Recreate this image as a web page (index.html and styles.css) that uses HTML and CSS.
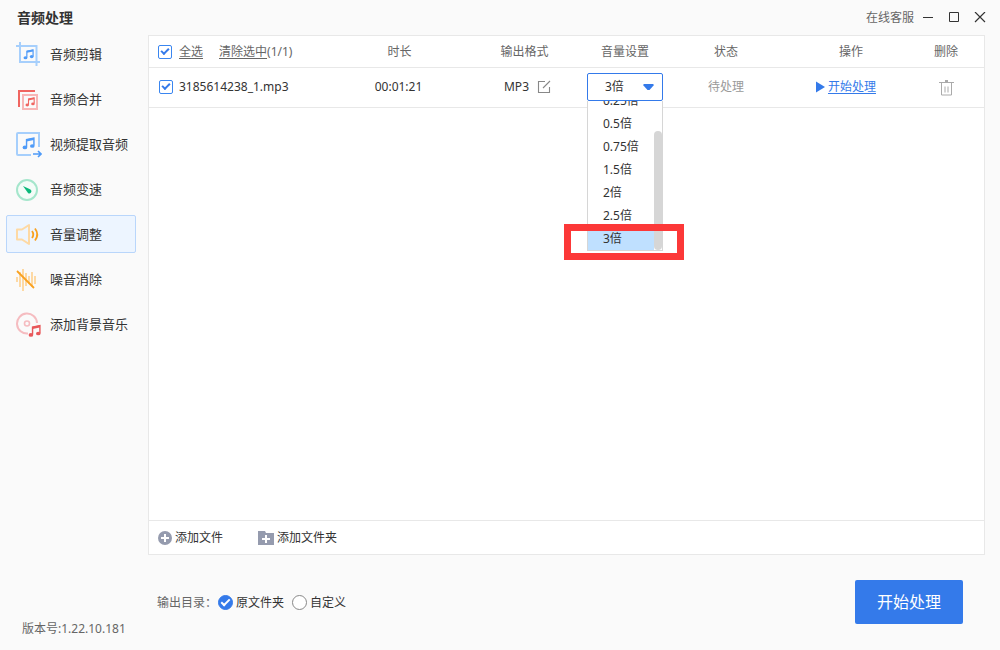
FILE: index.html
```html
<!DOCTYPE html>
<html lang="zh-CN">
<head>
<meta charset="utf-8">
<title>音频处理</title>
<link rel="stylesheet" href="styles.css">
</head>
<body>
<svg class="defs" aria-hidden="true">
  <symbol id="note" viewBox="0 0 12 12">
    <path d="M4.2 9.2V2.4L11 1v6.8" fill="none" stroke="currentColor" stroke-width="1.3"/>
    <path d="M4.2 2l6.8-1.4v2.2L4.2 4.2z" fill="currentColor"/>
    <ellipse cx="2.7" cy="9.6" rx="2.1" ry="1.7" fill="currentColor"/>
    <ellipse cx="9.5" cy="8.3" rx="2.1" ry="1.7" fill="currentColor"/>
  </symbol>
</svg>
<header class="titlebar">
  <h1 class="title">音频处理</h1>
  <div class="window-tools">
    <a class="service" href="#">在线客服</a>
    <button class="win-btn" aria-label="最小化"><svg width="12" height="12"><path d="M1 5.500h10" stroke="#333"/></svg></button>
    <button class="win-btn" aria-label="最大化"><svg width="12" height="12"><path d="M1.500 0.500h9v9h-9z" fill="none" stroke="#333"/></svg></button>
    <button class="win-btn" aria-label="关闭"><svg width="12" height="12"><path d="M1 0l10 10M11 0L1 10" stroke="#333" stroke-width="1.200"/></svg></button>
  </div>
</header>
<div class="layout">
  <aside class="sidebar">
    <nav class="menu">
      <a class="menu-item" href="#">
        <svg class="menu-icon blue" viewBox="0 0 26 26"><path d="M0 4h20.500V24M4 0v20h20" fill="none" stroke="#a6cffc" stroke-width="2"/><use href="#note" x="7" y="7" width="11" height="11"/></svg>音频剪辑</a>
      <a class="menu-item" href="#">
        <svg class="menu-icon red" viewBox="0 0 26 26"><path d="M3 20V4h16" fill="none" stroke="#f06560" stroke-width="2"/><path d="M7 8h14v14H7z" fill="none" stroke="#f8b6b6" stroke-width="2"/><use href="#note" x="9" y="10" width="10" height="10"/></svg>音频合并</a>
      <a class="menu-item" href="#">
        <svg class="menu-icon blue" viewBox="0 0 26 26"><path d="M15 23H2a1 1 0 0 1-1-1V2a1 1 0 0 1 1-1h21v14" fill="none" stroke="#a6cffc" stroke-width="2"/><use href="#note" x="6" y="5" width="13" height="13"/><path d="M17 22h8M22 19l3 3-3 3" fill="none" stroke="#4f9bf8" stroke-width="1.600"/></svg>视频提取音频</a>
      <a class="menu-item" href="#">
        <svg class="menu-icon" viewBox="0 0 26 26"><circle cx="11" cy="13" r="10" fill="#f4fcf8" stroke="#a5e6cc" stroke-width="2"/><path d="M7 9l7.500 3.500a2 2 0 0 1-2.500 3.500z" fill="#0bb87a"/></svg>音频变速</a>
      <a class="menu-item active" href="#" aria-current="page">
        <svg class="menu-icon" viewBox="0 0 26 26"><path d="M1 7.500h5l7-4.500v19l-7-4.500H1z" fill="none" stroke="#fdd9a4" stroke-width="2" stroke-linejoin="round"/><path d="M16 9q2.500 3.500 0 7M19 6.500q4.500 6 0 12" fill="none" stroke="#f9a11f" stroke-width="1.800"/></svg>音量调整</a>
      <a class="menu-item" href="#">
        <svg class="menu-icon" viewBox="0 0 26 26"><path d="M1 10v5M4 5v15M7 2v22M10 6v13M13 9v8M16 5v15M19 9v8" stroke="#fdd9a4" stroke-width="2"/><path d="M1 4l17 17" stroke="#f9a11f" stroke-width="1.800"/></svg>噪音消除</a>
      <a class="menu-item" href="#">
        <svg class="menu-icon darkred" viewBox="0 0 26 26"><path d="M12 21.500A10 10 0 1 1 21 11" fill="none" stroke="#f5bcc0" stroke-width="2"/><circle cx="11" cy="11.500" r="2.500" fill="none" stroke="#f5bcc0" stroke-width="1.600"/><use href="#note" x="12" y="12" width="13" height="14"/></svg>添加背景音乐</a>
    </nav>
    <p class="version">版本号:1.22.10.181</p>
  </aside>
  <main class="content">
    <section class="panel">
      <table class="files">
        <colgroup><col><col class="c-time"><col class="c-format"><col class="c-volume"><col class="c-state"><col class="c-action"><col class="c-delete"></colgroup>
        <thead>
          <tr>
            <th class="name"><div class="name-line"><input class="check" type="checkbox" id="all" checked><label class="link" for="all">全选</label><span class="clear"><a class="link" href="#">清除选中</a>(1/1)</span></div></th>
            <th>时长</th><th>输出格式</th><th>音量设置</th><th>状态</th><th>操作</th><th class="delete">删除</th>
          </tr>
        </thead>
        <tbody>
          <tr>
            <td class="name"><div class="name-line file"><input class="check" type="checkbox" id="f1" checked><label for="f1">3185614238_1.mp3</label></div></td>
            <td class="time">00:01:21</td>
            <td><div class="format">MP3<button class="plain" aria-label="编辑格式"><svg width="14" height="14"><path d="M8 1.500H1.500v11h11V7M6 8l7-7" fill="none" stroke="#888" stroke-width="1.100"/></svg></button></div></td>
            <td class="volume">
              <div class="combo">
                <select class="select" aria-label="音量设置"><option>0.25倍</option><option>0.5倍</option><option>0.75倍</option><option>1.5倍</option><option>2倍</option><option>2.5倍</option><option selected>3倍</option></select>
                <svg class="arrow" width="12" height="7"><path d="M1 0h9l1 1-4.500 5h-2L0 1z" fill="#347aea"/></svg>
                <div class="dropdown">
                  <ul class="options" role="listbox" aria-label="音量选项">
                    <li class="option" role="option">0.25倍</li><li class="option" role="option">0.5倍</li><li class="option" role="option">0.75倍</li><li class="option" role="option">1.5倍</li><li class="option" role="option">2倍</li><li class="option" role="option">2.5倍</li><li class="option selected" role="option" aria-selected="true">3倍</li>
                  </ul>
                  <div class="scroll"><div class="thumb"></div></div>
                </div>
                <div class="highlight"></div>
              </div>
            </td>
            <td class="waiting">待处理</td>
            <td><a class="start-link" href="#"><svg width="9" height="12"><path d="M0 0.500l9 5.500-9 5.500z" fill="#347aea"/></svg><span>开始处理</span></a></td>
            <td class="delete"><button class="plain" aria-label="删除"><svg width="15" height="16"><path d="M0 2.500h15M2.500 3v12h10V3M6 6.500v6M9 6.500v6" fill="none" stroke="#aaa"/><path d="M6 1h3" stroke="#aaa" stroke-width="2"/></svg></button></td>
          </tr>
        </tbody>
      </table>
      <div class="panel-foot">
        <button class="add"><svg width="14" height="14"><circle cx="7" cy="7" r="7" fill="#959bae"/><path d="M3 7h8M7 3v8" stroke="#fff" stroke-width="2"/></svg>添加文件</button>
        <button class="add"><svg width="16" height="14"><path d="M0 0h7l1 2h8v12H0z" fill="#959bae"/><path d="M4 8h8M8 4v8" stroke="#fff" stroke-width="2"/></svg>添加文件夹</button>
      </div>
    </section>
    <footer class="bottom">
      <div class="output">
        <span class="output-label">输出目录：</span>
        <label class="choice"><input class="radio" type="radio" name="dir" checked>原文件夹</label>
        <label class="choice"><input class="radio" type="radio" name="dir">自定义</label>
      </div>
      <button class="primary">开始处理</button>
    </footer>
  </main>
</div>
</body>
</html>
```
FILE: styles.css
```css
* { box-sizing: border-box; }
body {
  margin: 0;
  min-height: 100vh;
  display: flex;
  flex-direction: column;
  background: #fafafa;
  color: #333;
  font: 12px/18px "Noto Sans", "Noto Sans CJK SC", sans-serif;
}
button, select { font: inherit; color: inherit; }
button { border: 0; padding: 0; background: none; }
svg { flex: none; display: block; }
a { color: inherit; text-decoration: none; }
.defs { position: absolute; width: 0; height: 0; }

.titlebar {
  display: flex;
  justify-content: space-between;
  align-items: center;
  height: 35px;
  padding: 0 14px 0 17px;
}
.title { margin: 0; font-size: 14px; font-weight: bold; }
.window-tools { display: flex; align-items: center; gap: 14px; }
.service { color: #666; margin-right: -6px; }

.layout { flex: 1; display: flex; }
.sidebar {
  width: 148px;
  flex: none;
  display: flex;
  flex-direction: column;
  justify-content: space-between;
  padding: 0 12px 12px 6px;
}
.menu { display: flex; flex-direction: column; gap: 7px; }
.menu-item {
  display: flex;
  align-items: center;
  gap: 8px;
  height: 38px;
  padding-left: 9px;
  border: 1px solid transparent;
  border-radius: 2px;
  font-size: 13px;
}
.menu-item.active { background: #edf5ff; border-color: #b9d6fb; }
.menu-icon { width: 26px; height: 26px; margin-top: 2px; }
.blue { color: #4f9bf8; }
.red { color: #f06560; }
.darkred { color: #e8575a; }
.version { margin: 0 0 0 16px; color: #666; }

.content { flex: 1; min-width: 0; display: flex; flex-direction: column; padding-right: 15px; }
.panel {
  flex: 1;
  display: flex;
  flex-direction: column;
  justify-content: space-between;
  background: #fff;
  border: 1px solid #e8e8e8;
}
.files { width: 100%; table-layout: fixed; border-collapse: separate; border-spacing: 0; }
.c-time, .c-format { width: 125px; }
.c-volume { width: 76px; }
.c-state { width: 126px; }
.c-action { width: 124px; }
.c-delete { width: 71px; }
.files th, .files td { padding: 0; text-align: center; border-bottom: 1px solid #e8e8e8; }
.files th { height: 32px; font-weight: normal; color: #666; }
.files td { height: 40px; padding-bottom: 1px; }
.files .delete { padding-right: 5px; }
.name-line { display: flex; align-items: center; padding-left: 9px; gap: 7px; white-space: nowrap; }
.name-line.file { padding-left: 10px; gap: 6px; }
.link { text-decoration: underline; text-underline-offset: 2px; }
.clear { margin-left: 9px; }
.check {
  appearance: none;
  position: relative;
  width: 14px;
  height: 14px;
  margin: 0;
  border: 1px solid #3a86f0;
  border-radius: 2px;
  background: #fff;
}
.check:checked::after {
  content: "";
  position: absolute;
  left: 2px;
  top: 2px;
  width: 8px;
  height: 5px;
  border: solid #347aea;
  border-width: 0 0 2px 2px;
  transform: rotate(-45deg);
}
.files .time { padding-right: 2px; }
.format { display: flex; align-items: center; justify-content: center; gap: 8px; padding-left: 6px; }
.waiting { color: #999; }
.combo { position: relative; height: 28px; }
.select {
  appearance: none;
  display: block;
  width: 100%;
  height: 28px;
  padding: 0 17px;
  border: 1px solid #347aea;
  border-radius: 2px;
  background: #fff;
}
.arrow { position: absolute; right: 8px; top: 11px; pointer-events: none; }
.dropdown {
  position: absolute;
  top: 100%;
  left: 0;
  right: 0;
  z-index: 1;
  height: 150px;
  display: flex;
  background: #fff;
  border: 1px solid #d6d6d6;
  border-top: 0;
}
.options {
  flex: 1;
  display: flex;
  flex-direction: column;
  justify-content: flex-end;
  overflow: hidden;
  margin: 0;
  padding: 0;
  list-style: none;
  text-align: left;
}
.option { flex: none; height: 23px; line-height: 24px; padding-left: 15px; }
.option.selected { background: #bfe0ff; }
.scroll { width: 8px; display: flex; align-items: flex-end; }
.thumb { width: 8px; height: 80%; border-radius: 4px; background: #d6d6d6; }
.highlight {
  position: absolute;
  z-index: 2;
  left: -23px;
  top: 151px;
  width: 120px;
  height: 36px;
  border: 7px solid #fc3838;
}
.start-link { display: flex; align-items: center; justify-content: center; gap: 3px; padding-right: 10px; color: #347aea; }
.start-link span { text-decoration: underline; text-underline-offset: 2px; }
.files .delete svg { display: inline-block; vertical-align: middle; }

.panel-foot {
  display: flex;
  align-items: center;
  gap: 35px;
  height: 34px;
  padding-left: 9px;
  border-top: 1px solid #e8e8e8;
}
.add { display: flex; align-items: center; gap: 3px; }

.bottom {
  display: flex;
  align-items: center;
  justify-content: space-between;
  height: 95px;
  padding: 0 22px 0 9px;
}
.output { display: flex; align-items: center; gap: 8px; }
.output-label { color: #666; margin-right: -7px; }
.choice { display: flex; align-items: center; gap: 3px; }
.radio {
  appearance: none;
  position: relative;
  width: 15px;
  height: 15px;
  margin: 0;
  border: 1px solid #888;
  border-radius: 50%;
  background: #fff;
}
.radio:checked { background: #347aea; border-color: #347aea; }
.radio:checked::after {
  content: "";
  position: absolute;
  left: 2px;
  top: 3px;
  width: 9px;
  height: 5px;
  border: solid #fff;
  border-width: 0 0 2px 2px;
  transform: rotate(-45deg);
}
.primary {
  width: 108px;
  height: 44px;
  margin-bottom: 2px;
  border-radius: 2px;
  background: #347aea;
  color: #fff;
  font-size: 16px;
}
.check::after, .radio::after { box-sizing: border-box; }
```
